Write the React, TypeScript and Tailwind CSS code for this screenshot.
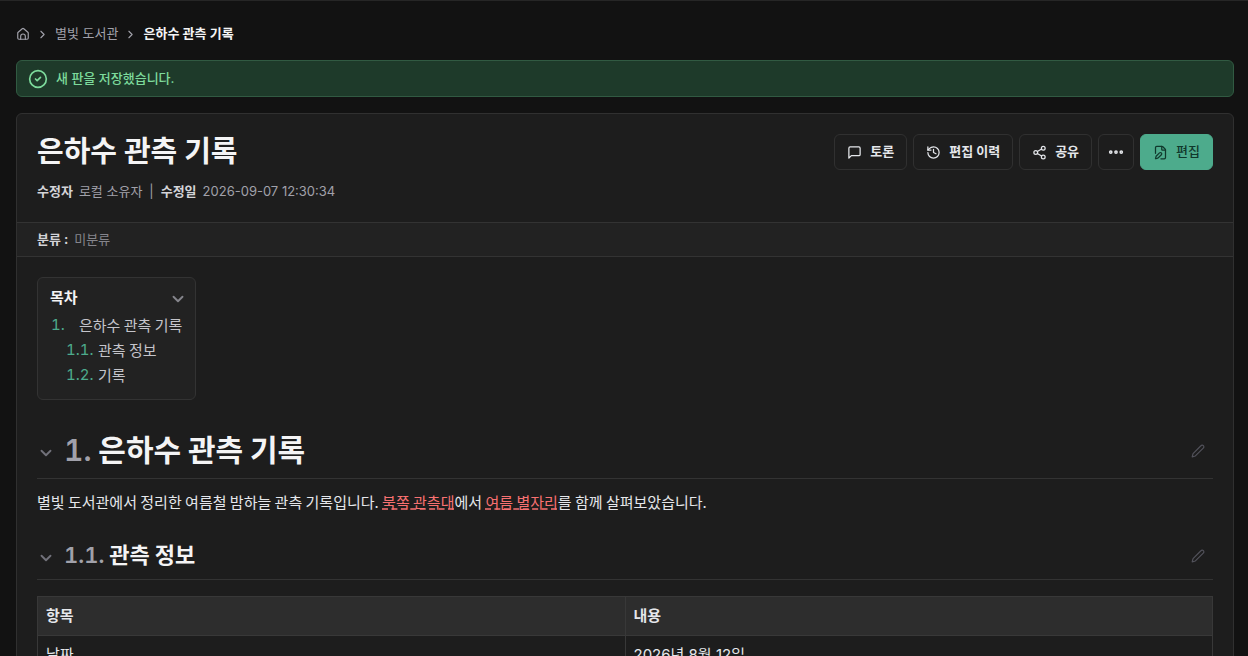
import { ChevronDown, ChevronRight, CircleCheck, Ellipsis, FilePen, History, Share2 } from "lucide-react";
import type { ReactNode } from "react";

const btn =
  "inline-flex h-9 items-center gap-2 rounded-md border border-[#303030] px-3 text-[13px] font-bold text-[#e5e7eb] hover:bg-[#262626]";

const sans = "font-['Inter','Noto_Sans_CJK_KR',sans-serif]";
const wiki = "font-['Noto_Sans_CJK_KR',sans-serif]";
const cell = "border border-[#383838] px-2";

function Icon({ size, children }: { size: number; children: ReactNode }) {
  return (
    <svg width={size} height={size} viewBox="0 0 24 24" fill="none" stroke="currentColor" strokeWidth="2" strokeLinecap="round" strokeLinejoin="round" aria-hidden="true">
      {children}
    </svg>
  );
}

const toc = [
  { num: "1.", title: "은하수 관측 기록", href: "#s-1", row: "pl-px", width: "w-7" },
  { num: "1.1.", title: "관측 정보", href: "#s-1.1", row: "pl-4", width: "w-8" },
  { num: "1.2.", title: "기록", href: "#s-1.2", row: "pl-4", width: "w-8" },
];

function FoldButton() {
  return (
    <button type="button" aria-label="접기" className="mt-2 mr-[7px] w-5 text-[#71717a]">
      <ChevronDown size={18} strokeWidth={2.5} />
    </button>
  );
}

function EditLink({ href }: { href: string }) {
  return (
    <a href={href} aria-label="편집" className="mt-1 mr-2 ml-auto text-[#52525b]">
      <Icon size={14}><path d="M17 3a2.85 2.83 0 1 1 4 4L7.5 20.5 2 22l1.5-5.5Z" /></Icon>
    </a>
  );
}

export default function App() {
  return (
    <div className={`${sans} h-screen overflow-hidden border-t border-[#262626] bg-[#121212] pr-[14px] pl-4 text-[#e5e7eb]`}>
      <nav aria-label="breadcrumb" className="mt-[23px] flex h-5 items-center gap-1.5 text-[13px] text-[#a1a1aa]">
        <a href="#home" aria-label="홈">
          <Icon size={14}>
            <path d="M3 10.5a2 2 0 0 1 .7-1.5l7-6a2 2 0 0 1 2.6 0l7 6a2 2 0 0 1 .7 1.5V19a2 2 0 0 1-2 2H5a2 2 0 0 1-2-2z" />
            <path d="M8 21v-5a4 4 0 0 1 8 0v5" />
          </Icon>
        </a>
        <ChevronRight size={13} />
        <a href="#library">별빛 도서관</a>
        <ChevronRight size={13} />
        <span className="font-semibold text-[#f4f4f5]">은하수 관측 기록</span>
      </nav>

      <div role="status" className="mt-4 flex h-[37px] items-center gap-2 rounded-md border border-[#315a42] bg-[#1e3a2a] px-[11px] text-[13px] font-medium text-[#7ddb9c]">
        <CircleCheck size={20} />
        <span>새 판을 저장했습니다.</span>
      </div>

      <main className="mt-4 rounded-md border border-[#303030] bg-[#1d1d1d]">
        <header className="flex h-[108px] items-start justify-between px-5 pt-5">
          <div>
            <h1 className="text-[29px] leading-9 font-bold text-[#f4f4f5]">은하수 관측 기록</h1>
            <div className="mt-[11px] flex items-center gap-1.5 text-[13px] leading-5 text-[#a1a1aa]">
              <b className="font-semibold text-[#d4d4d8]">수정자</b>
              <span>로컬 소유자</span>
              <span className="px-px">|</span>
              <b className="font-semibold text-[#d4d4d8]">수정일</b>
              <time>2026-09-07 12:30:34</time>
            </div>
          </div>
          <div className="flex gap-1.5">
            <button type="button" className={btn}>
              <Icon size={15}><path d="M21 15a2 2 0 0 1-2 2H7l-4 4V5a2 2 0 0 1 2-2h14a2 2 0 0 1 2 2z" /></Icon>
              토론
            </button>
            <button type="button" className={btn}><History size={15} />편집 이력</button>
            <button type="button" className={btn}><Share2 size={15} />공유</button>
            <button type="button" aria-label="더 보기" className="inline-flex size-9 items-center justify-center rounded-md border border-[#303030]"><Ellipsis size={18} strokeWidth={3} /></button>
            <button type="button" className="inline-flex h-9 items-center gap-2 rounded-md border border-[#4dab8c] bg-[#4dab8c] px-3 text-[13px] font-medium text-[#10382c]"><FilePen size={15} />편집</button>
          </div>
        </header>

        <div className="flex h-[35px] items-center gap-1.5 border-y border-[#333333] bg-[#222222] px-5 text-[13px]">
          <b className="text-[#d4d4d8]">분류 :</b>
          <span className="text-[#85858c]">미분류</span>
        </div>

        <div className={`${wiki} px-5 pt-5`}>
          <nav aria-label="목차" className="w-[159px] rounded-md border border-[#333333] bg-[#222222] px-3 pt-[7px] pb-[11px]">
            <button type="button" aria-expanded="true" className="flex h-6 w-full items-center justify-between text-[15px] font-bold text-[#f4f4f5]">
              목차
              <ChevronDown size={18} strokeWidth={2.5} className="mt-1 -mr-1 text-[#85858c]" />
            </button>
            <ol className="mt-1">
              {toc.map((t) => (
                <li key={t.num} className={`${t.row} flex h-[25px] items-center text-[15px] whitespace-nowrap text-[#c4c4ca]`}>
                  <span className={`${t.width} ${sans} text-[#4dab8c] tabular-nums`}>{t.num}</span>
                  <a href={t.href}>{t.title}</a>
                </li>
              ))}
            </ol>
          </nav>

          <section id="s-1">
            <div className="mt-7 flex items-center border-b border-[#333333] pb-2">
              <FoldButton />
              <h2 className="text-3xl leading-10 font-bold text-[#f4f4f5]">
                <span className={`${sans} font-semibold text-[#a1a1aa] tabular-nums`}>1.</span> 은하수 관측 기록
              </h2>
              <EditLink href="#edit-1" />
            </div>
            <p className="mt-[11px] text-[15px] leading-6">
              별빛 도서관에서 정리한 여름철 밤하늘 관측 기록입니다. <a href="#north" className="text-[#f87171] underline decoration-dashed">북쪽 관측대</a>에서 <a href="#summer" className="text-[#f87171] underline decoration-dashed">여름 별자리</a>를 함께 살펴보았습니다.
            </p>
          </section>

          <section id="s-1.1">
            <div className="mt-[23px] flex items-center border-b border-[#333333] pb-2">
              <FoldButton />
              <h3 className="text-[22px] leading-8 font-bold text-[#f4f4f5]">
                <span className={`${sans} font-semibold text-[#a1a1aa] tabular-nums`}>1.1.</span> 관측 정보
              </h3>
              <EditLink href="#edit-1-1" />
            </div>
            <table className={`${sans} mt-4 w-full table-fixed border-collapse text-left text-[15px] leading-6`}>
              <thead className="bg-[#2d2d2d]">
                <tr>
                  <th className={`${cell} py-[7px]`}>항목</th>
                  <th className={`${cell} py-[7px]`}>내용</th>
                </tr>
              </thead>
              <tbody>
                <tr>
                  <td className={`${cell} py-[7px]`}>날짜</td>
                  <td className={`${cell} py-[7px]`}>2026년 8월 12일</td>
                </tr>
              </tbody>
            </table>
          </section>
        </div>
      </main>
    </div>
  );
}
